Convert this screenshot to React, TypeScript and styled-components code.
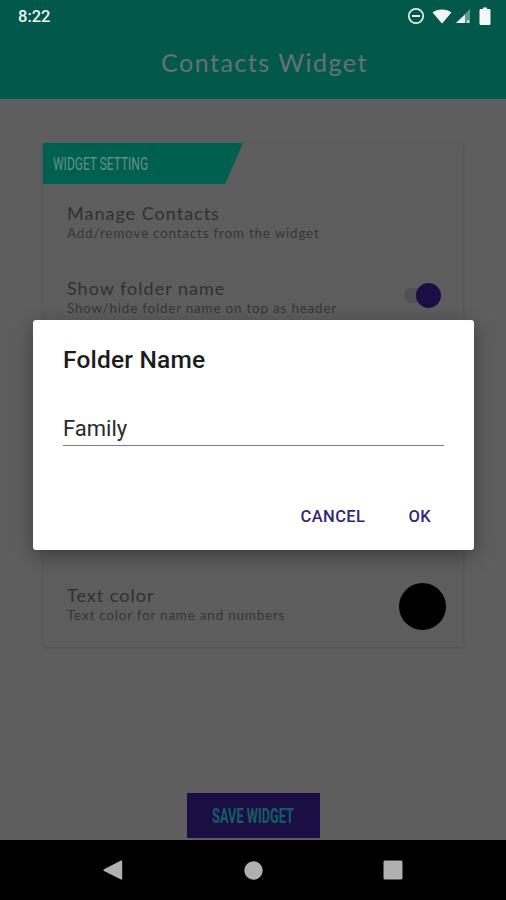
import React from 'react'
import styled, { createGlobalStyle } from 'styled-components'

const GlobalStyle = createGlobalStyle`
  html, body { margin: 0; padding: 0; background: #5e5e5e; }
  * { box-sizing: border-box; }
`

const Screen = styled.div`
  position: relative;
  width: 506px;
  height: 900px;
  overflow: hidden;
  display: flex;
  flex-direction: column;
  background: #5e5e5e;
  font-family: "Lato", "Open Sans", sans-serif;
`

const Header = styled.header`
  height: 99px;
  flex: none;
  background: #02594b;
  display: flex;
  flex-direction: column;
`

const StatusBar = styled.div`
  height: 32px;
  padding: 0 15px 0 18px;
  display: flex;
  align-items: center;
  justify-content: space-between;
  color: #f1f5f3;
  font: 500 16.5px "Roboto", sans-serif;
`

const StatusIcons = styled.div`
  display: flex;
  align-items: center;
  gap: 3px;
`

const AppTitle = styled.h1`
  margin: 0;
  padding: 15px 0 0 23px;
  font: 400 25px/30px "Lato", sans-serif;
  letter-spacing: 1.5px;
  color: #667270;
  text-align: center;
`

const Main = styled.main`
  flex: 1;
  display: flex;
  flex-direction: column;
  align-items: center;
  padding-top: 44px;
`

const Card = styled.section`
  width: 420px;
  height: 504px;
  background: #5d5d5d;
  box-shadow: 0 1px 3px rgba(0, 0, 0, 0.18);
`

const Ribbon = styled.div`
  width: 200px;
  height: 41px;
  padding-left: 10px;
  display: flex;
  align-items: center;
  background: #006050;
  clip-path: polygon(0 0, 100% 0, 91% 100%, 0 100%);
  color: #668f86;
  font: 400 19px "Liberation Sans Narrow", "Roboto", sans-serif;
`

const RibbonText = styled.span`
  display: inline-block;
  transform: scaleX(0.63);
  transform-origin: left center;
  white-space: nowrap;
`

const SettingRow = styled.div<{ $height: number }>`
  height: ${({ $height }) => $height}px;
  padding: 0 17px 0 24px;
  display: flex;
  align-items: center;
  justify-content: space-between;
`

const SettingText = styled.div`
  display: flex;
  flex-direction: column;
`

const SettingTitle = styled.div`
  font-size: 18px;
  line-height: 22px;
  margin-bottom: 1px;
  letter-spacing: 1px;
  color: #303030;
`

const SettingHint = styled.div`
  font-size: 13.5px;
  line-height: 17px;
  letter-spacing: 0.77px;
  color: #363636;
`

const CardGap = styled.div`
  height: 226px;
`

const Toggle = styled.div`
  position: relative;
  width: 36px;
  height: 15px;
  margin: -3px 6px 0 0;
  border-radius: 8px;
  background: #515155;
`

const ToggleKnob = styled.div`
  position: absolute;
  right: -1px;
  top: -5px;
  width: 25px;
  height: 25px;
  border-radius: 50%;
  background: #1a0e45;
`

const ColorDot = styled.div<{ $color: string }>`
  width: 47px;
  height: 47px;
  margin-top: 5px;
  border-radius: 50%;
  background: ${({ $color }) => $color};
`

const SaveButton = styled.button`
  margin-top: 146px;
  width: 133px;
  height: 45px;
  border: 0;
  padding: 0;
  background: #1a0e45;
  color: #125e64;
  font: 700 20px "Liberation Sans Narrow", "Roboto", sans-serif;
  display: flex;
  align-items: center;
  justify-content: center;
`

const SaveText = styled.span`
  display: inline-block;
  transform: scaleX(0.64);
  white-space: nowrap;
`

const NavBar = styled.nav`
  height: 60px;
  flex: none;
  background: #000;
  display: flex;
  align-items: center;
  justify-content: space-between;
  padding: 0 103px 0 103px;
`

const Dialog = styled.div`
  position: absolute;
  left: 33px;
  top: 320px;
  width: 441px;
  height: 230px;
  padding: 25px 30px 0;
  display: flex;
  flex-direction: column;
  background: #ffffff;
  border-radius: 3px;
  box-shadow: 0 6px 20px rgba(0, 0, 0, 0.35);
  font-family: "Roboto", sans-serif;
`

const DialogTitle = styled.h2`
  margin: 0;
  font: 500 24.5px/30px "Roboto", sans-serif;
  letter-spacing: 0.2px;
  color: #1c1c1c;
`

const NameField = styled.div`
  margin-top: 36px;
  height: 35px;
  padding-top: 2px;
  border-bottom: 1.5px solid #7d7d7d;
  font-size: 22px;
  line-height: 32px;
  color: #2a2a2a;
`

const DialogActions = styled.div`
  margin-top: 61px;
  display: flex;
  justify-content: flex-end;
  gap: 43px;
  padding-right: 13px;
`

const DialogAction = styled.span`
  font: 500 16.5px/20px "Roboto", sans-serif;
  letter-spacing: 0.4px;
  color: #33267a;
`

export default function App() {
  return (
    <Screen>
      <GlobalStyle />
      <Header>
        <StatusBar>
          <span>8:22</span>
          <StatusIcons>
            <svg width="18" height="18" viewBox="0 0 18 18" style={{ marginRight: 4 }}>
              <circle cx="9" cy="9" r="7.2" fill="none" stroke="#e8efec" strokeWidth="1.7" />
              <rect x="5" y="8" width="8" height="2" fill="#e8efec" />
            </svg>
            <svg width="20" height="15" viewBox="0 0 20 15">
              <path d="M0.5 3.5C3 1.4 6.2 0.5 10 0.5s7 .9 9.5 3L10 14.500z" fill="#f4f7f6" />
            </svg>
            <svg width="16" height="16" viewBox="0 0 16 16">
              <path d="M15 1V15H1z" fill="#5f9a8c" />
              <path d="M10 6.5V15H1z" fill="#eef3f1" />
              <rect x="12" y="12.5" width="2.2" height="2.2" fill="#eef3f1" />
            </svg>
            <svg width="12" height="18" viewBox="0 0 12 18" style={{ marginLeft: 5 }}>
              <path d="M4 0.5h4v1.6h2.2c.7 0 1.3.6 1.3 1.3v13.3c0 .7-.6 1.3-1.3 1.3H1.8c-.7 0-1.3-.6-1.3-1.3V3.4c0-.7.6-1.3 1.3-1.3H4z" fill="#f4f7f6" />
            </svg>
          </StatusIcons>
        </StatusBar>
        <AppTitle>Contacts Widget</AppTitle>
      </Header>
      <Main>
        <Card>
          <Ribbon><RibbonText>WIDGET SETTING</RibbonText></Ribbon>
          <SettingRow $height={75}>
            <SettingText>
              <SettingTitle>Manage Contacts</SettingTitle>
              <SettingHint>Add/remove contacts from the widget</SettingHint>
            </SettingText>
          </SettingRow>
          <SettingRow $height={76}>
            <SettingText>
              <SettingTitle>Show folder name</SettingTitle>
              <SettingHint>Show/hide folder name on top as header</SettingHint>
            </SettingText>
            <Toggle><ToggleKnob /></Toggle>
          </SettingRow>
          <CardGap />
          <SettingRow $height={86}>
            <SettingText>
              <SettingTitle>Text color</SettingTitle>
              <SettingHint>Text color for name and numbers</SettingHint>
            </SettingText>
            <ColorDot $color="#000000" />
          </SettingRow>
        </Card>
        <SaveButton><SaveText>SAVE WIDGET</SaveText></SaveButton>
      </Main>
      <NavBar>
        <svg width="20" height="22" viewBox="0 0 20 22">
          <path d="M18 1.5c.6-.3 1.2.1 1.2.8v17.4c0 .7-.6 1.100-1.200.8L1 12c-.7-.4-.7-1.400 0-1.800z" fill="#b0b0b0" />
        </svg>
        <svg width="19" height="19" viewBox="0 0 19 19">
          <circle cx="9.500" cy="9.500" r="9.200" fill="#b0b0b0" />
        </svg>
        <svg width="20" height="20" viewBox="0 0 20 20">
          <rect x="0.500" y="0.500" width="19" height="19" rx="1.500" fill="#b0b0b0" />
        </svg>
      </NavBar>
      <Dialog>
        <DialogTitle>Folder Name</DialogTitle>
        <NameField>Family</NameField>
        <DialogActions>
          <DialogAction>CANCEL</DialogAction>
          <DialogAction>OK</DialogAction>
        </DialogActions>
      </Dialog>
    </Screen>
  )
}
